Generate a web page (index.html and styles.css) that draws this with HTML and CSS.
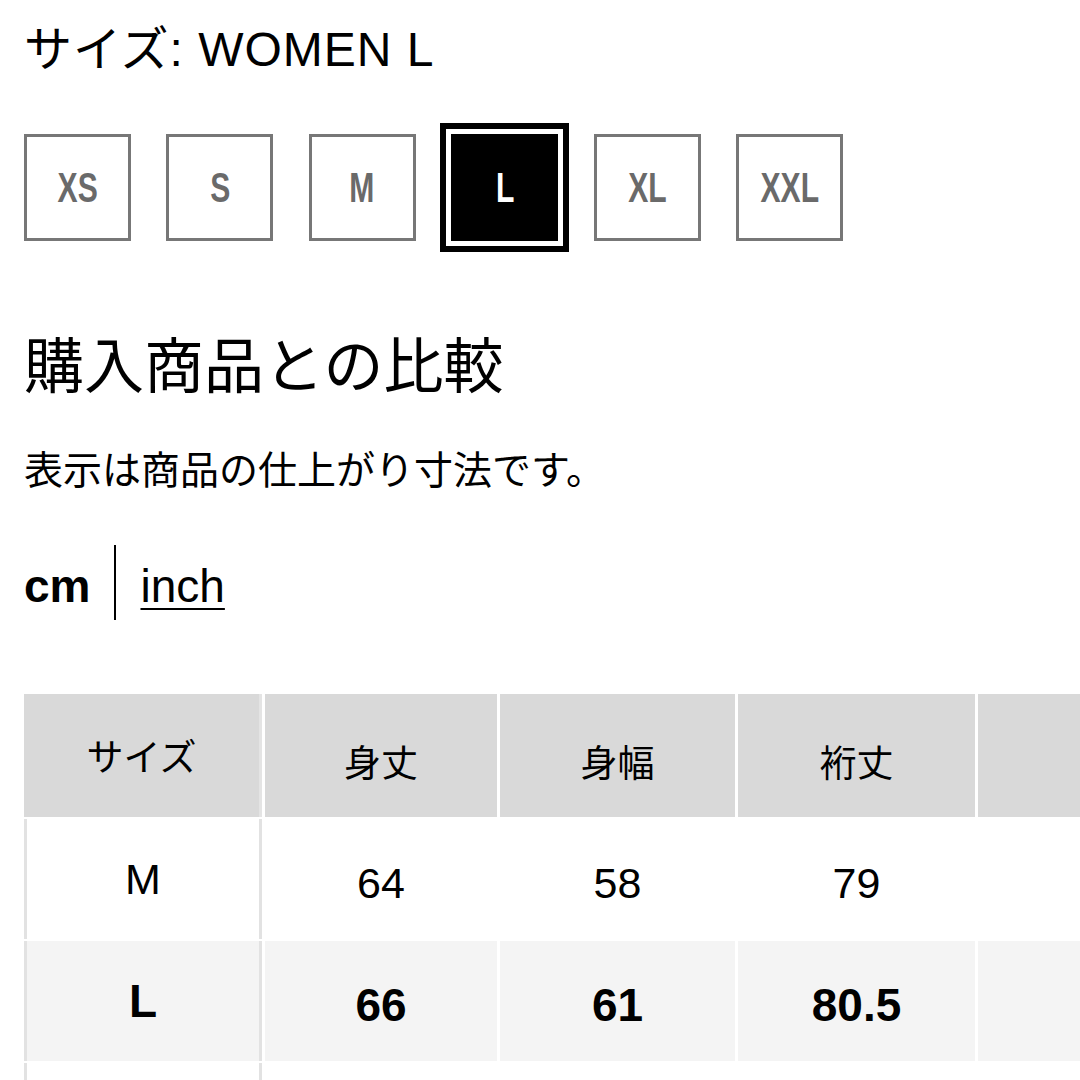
FILE: index.html
```html
<!DOCTYPE html>
<html lang="ja">
<head>
<meta charset="utf-8">
<title>サイズ比較</title>
<link rel="stylesheet" href="styles.css">
</head>
<body>
<div class="page">
  <h1 class="title">サイズ: WOMEN L</h1>
  <div class="sizes">
    <div class="size"><span class="size-label">XS</span></div>
    <div class="size"><span class="size-label">S</span></div>
    <div class="size"><span class="size-label">M</span></div>
    <div class="size selected"><span class="size-label">L</span></div>
    <div class="size"><span class="size-label">XL</span></div>
    <div class="size"><span class="size-label">XXL</span></div>
  </div>
  <h2 class="heading">購入商品との比較</h2>
  <p class="note">表示は商品の仕上がり寸法です。</p>
  <div class="units">
    <span class="unit-active">cm</span>
    <span class="divider"></span>
    <a class="unit-link">inch</a>
  </div>
  <div class="table">
    <div class="cell head first">サイズ</div>
    <div class="cell head">身丈</div>
    <div class="cell head">身幅</div>
    <div class="cell head">裄丈</div>
    <div class="cell head"></div>

    <div class="cell body first">M</div>
    <div class="cell body num">64</div>
    <div class="cell body num">58</div>
    <div class="cell body num">79</div>
    <div class="cell body num"></div>

    <div class="cell body first current">L</div>
    <div class="cell body num current">66</div>
    <div class="cell body num current">61</div>
    <div class="cell body num current">80.5</div>
    <div class="cell body num current"></div>

    <div class="cell body first"></div>
    <div class="cell body num"></div>
    <div class="cell body num"></div>
    <div class="cell body num"></div>
    <div class="cell body num"></div>
  </div>
</div>
</body>
</html>
```

FILE: styles.css
```css
html, body {
  margin: 0;
  padding: 0;
  background: #fff;
}
body {
  width: 1080px;
  height: 1080px;
  overflow: hidden;
  color: #000;
  font-family: "Noto Sans CJK JP", "Noto Sans", sans-serif;
}
.page {
  padding-left: 24px;
  padding-top: 20px;
}
.title {
  margin: 0;
  font-family: "Liberation Sans", "Noto Sans CJK JP", sans-serif;
  font-size: 48px;
  font-weight: 400;
  line-height: 60px;
  letter-spacing: 1px;
}
.sizes {
  display: flex;
  gap: 35.4px;
  margin-top: 54px;
}
.size {
  box-sizing: border-box;
  width: 107px;
  height: 107px;
  border: 3px solid #777;
  display: flex;
  align-items: center;
  justify-content: center;
}
.size-label {
  display: inline-block;
  font-family: "Liberation Sans Narrow", "Liberation Sans", sans-serif;
  font-stretch: condensed;
  font-weight: 700;
  font-size: 43px;
  line-height: 1;
  color: #6a6a6a;
  transform: scaleX(0.7);
}
.size.selected {
  background: #000;
  border-color: #000;
  outline: 6px solid #000;
  outline-offset: 5px;
}
.size.selected .size-label {
  color: #fff;
}
.heading {
  margin: 86px 0 0;
  font-size: 60px;
  font-weight: 400;
  line-height: 70px;
}
.note {
  margin: 45px 0 0;
  font-size: 39px;
  line-height: 50px;
}
.units {
  display: flex;
  align-items: flex-start;
  height: 75px;
  margin-top: 53px;
  font-family: "Liberation Sans", Arial, sans-serif;
  font-size: 46px;
}
.unit-active {
  font-weight: 700;
  line-height: 46px;
  margin-top: 18px;
  margin-right: 24px;
}
.divider {
  width: 2px;
  height: 75px;
  background: #000;
  margin-right: 24px;
}
.unit-link {
  line-height: 46px;
  margin-top: 18px;
  color: #000;
  text-decoration: underline;
  text-decoration-thickness: 2px;
  text-underline-offset: 6px;
}
.table {
  display: grid;
  grid-template-columns: 238px 232px 235px 237px 240px;
  grid-template-rows: 123px 120px 120px 120px;
  column-gap: 3px;
  row-gap: 2px;
  margin-top: 74px;
}
.cell {
  box-sizing: border-box;
  display: flex;
  align-items: center;
  justify-content: center;
  font-size: 37px;
  line-height: 1;
}
.head {
  background: #d9d9d9;
  padding-top: 12px;
}
.head.first {
  padding-top: 0;
  border-right: 3px solid #e4e4e4;
}
.body {
  background: #fff;
  font-family: "Liberation Sans", Arial, sans-serif;
  font-size: 43px;
}
.body.num {
  padding-top: 8px;
}
.body.first {
  border-left: 3px solid #e2e2e2;
  border-right: 3px solid #e2e2e2;
}
.body.current {
  background: #f4f4f4;
  font-weight: 700;
  font-size: 46px;
}
```
